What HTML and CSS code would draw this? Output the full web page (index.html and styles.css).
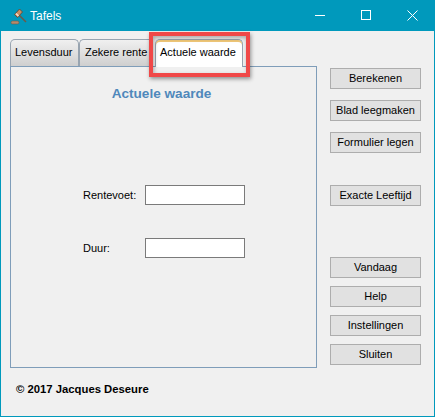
FILE: index.html
```html
<!DOCTYPE html>
<html lang="nl">
<head>
    <meta charset="UTF-8">
    <title>Tafels</title>
    <link rel="stylesheet" href="styles.css">
</head>
<body>
<div class="window">
    <div class="titlebar">
        <svg class="appicon" width="18" height="18" viewBox="0 0 18 18">
            <path d="M9 8l7 7" stroke="#6b5a48" stroke-width="1.6"/>
            <path d="M4.500 7.500l5-5.500 3 3-5 5.500z" fill="#c98d62" stroke="#5a4230" stroke-width=".8"/>
            <path d="M6 6.500l2.500 2.500" stroke="#f3e3d2" stroke-width="1.400"/>
            <rect x="1" y="14" width="8" height="3" rx="1.500" fill="#b58a6b" stroke="#6b5a48" stroke-width=".6"/>
        </svg>
        <span class="title">Tafels</span>
        <div class="winbtns">
            <svg width="11" height="11" viewBox="0 0 11 11"><path d="M0 5.500h10" stroke="#fff" fill="none"/></svg>
            <svg width="11" height="11" viewBox="0 0 11 11"><rect x=".5" y=".5" width="9" height="9" stroke="#fff" fill="none"/></svg>
            <svg width="11" height="11" viewBox="0 0 11 11"><path d="M.5.5l10 10M10.500.5l-10 10" stroke="#fff" fill="none"/></svg>
        </div>
    </div>

    <div class="content">
        <div class="main">
            <div class="left">
                <ul class="tabs">
                    <li>Levensduur</li>
                    <li class="second">Zekere rente</li>
                    <li class="active">Actuele waarde</li>
                </ul>
                <div class="panel">
                    <h1>Actuele waarde</h1>
                    <div class="row first">
                        <label>Rentevoet:</label>
                        <div class="field"></div>
                    </div>
                    <div class="row">
                        <label>Duur:</label>
                        <div class="field"></div>
                    </div>
                </div>
            </div>
            <div class="buttons">
                <div class="btn">Berekenen</div>
                <div class="btn gap">Blad leegmaken</div>
                <div class="btn gap">Formulier legen</div>
                <div class="btn gap2">Exacte Leeftijd</div>
                <div class="btn gap3">Vandaag</div>
                <div class="btn gap4">Help</div>
                <div class="btn gap4">Instellingen</div>
                <div class="btn gap4">Sluiten</div>
            </div>
        </div>
        <div class="copy">© 2017 Jacques Deseure</div>
    </div>
    <div class="highlight"></div>
</div>
</body>
</html>
```

FILE: styles.css
```css
body,ul,li,h1{
    margin:0;
    padding:0;
    list-style:none;
}
body{
    font-family:"Liberation Sans",Arial,sans-serif;
    font-size:11px;
    color:#000;
}
.window{
    width:435px;
    height:417px;
    box-sizing:border-box;
    border:1px solid #0099bc;
    border-top:0;
    background:#f0f0f0;
    position:relative;
    overflow:hidden;
}
.titlebar{
    height:31px;
    background:#0099bc;
    margin:0 -1px;
    padding-left:10px;
    display:flex;
    align-items:center;
    color:#fff;
}
.appicon{
    margin-right:2px;
}
.title{
    font-size:12px;
}
.winbtns{
    margin-left:auto;
    padding-right:17px;
    display:flex;
    gap:35px;
}
.content{
    padding:7px 0 0 9px;
}
.main{
    display:flex;
}
.left{
    width:307px;
}
.tabs{
    display:flex;
    height:28px;
    position:relative;
    z-index:1;
    align-items:flex-end;
}
.tabs li{
    box-sizing:border-box;
    height:27px;
    width:69px;
    border:1px solid #98a4b0;
    border-bottom:0;
    border-radius:5px 5px 0 0;
    background:linear-gradient(#f0f0f0,#cfcfcf);
    padding:6px 0 0 4px;
    white-space:nowrap;
    overflow:hidden;
}
.tabs .second{
    width:74px;
    padding-left:5px;
    border-right:0;
    border-radius:5px 0 0 0;
}
.tabs .active{
    width:88px;
    height:28px;
    margin-bottom:-1px;
    margin-left:2px;
    padding-left:4px;
    background:#fff;
    box-shadow:inset 0 2px 0 #f0c878;
}
.panel{
    box-sizing:border-box;
    height:302px;
    border:1px solid #7f9db9;
    padding-top:19px;
}
h1{
    font-size:13.6px;
    font-weight:bold;
    color:#4f88bb;
    text-align:center;
    line-height:15px;
    padding-right:4px;
}
.row{
    display:flex;
    align-items:center;
    padding-left:72px;
    margin-top:33px;
}
.row.first{
    margin-top:84px;
}
label{
    width:62px;
}
.field{
    width:100px;
    height:20px;
    box-sizing:border-box;
    border:1px solid #7a7a7a;
    background:#fff;
}
.buttons{
    margin-left:13px;
    padding-top:30px;
    display:flex;
    flex-direction:column;
    width:91px;
}
.btn{
    height:21px;
    box-sizing:border-box;
    border:1px solid #adadad;
    background:#e1e1e1;
    text-align:center;
    line-height:19px;
    white-space:nowrap;
}
.gap{
    margin-top:11px;
}
.gap2{
    margin-top:32px;
}
.gap3{
    margin-top:51px;
}
.gap4{
    margin-top:8px;
}
.copy{
    font-size:11.3px;
    font-weight:bold;
    margin:15px 0 0 6px;
}
.highlight{
    position:absolute;
    z-index:2;
    left:148px;
    top:32px;
    width:101px;
    height:45px;
    box-sizing:border-box;
    border:4px solid #f04848;
    box-shadow:1px 2px 4px rgba(0,0,0,.4),inset 1px 2px 4px rgba(0,0,0,.3);
}
```
